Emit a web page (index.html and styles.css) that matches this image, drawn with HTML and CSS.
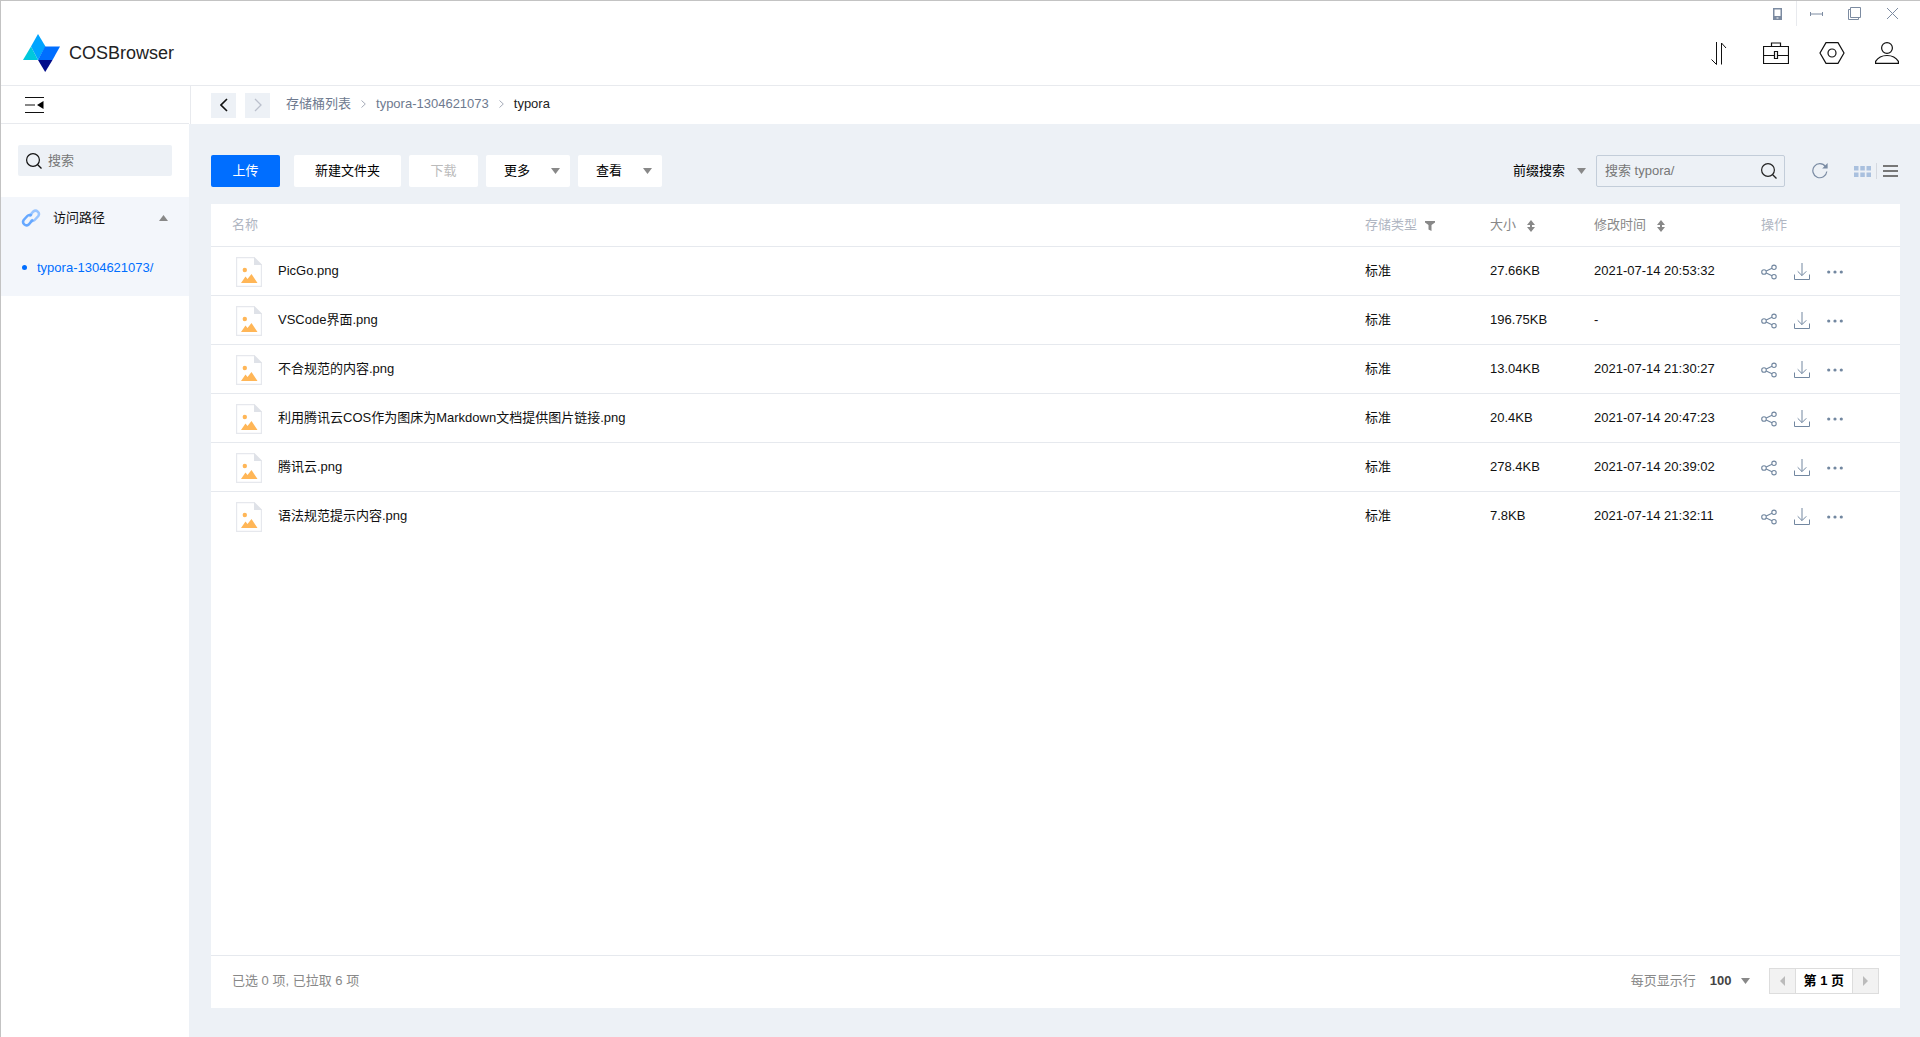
FILE: index.html
```html
<!DOCTYPE html>
<html lang="zh-CN">
<head>
<meta charset="utf-8">
<title>COSBrowser</title>
<link rel="stylesheet" href="styles.css">
</head>
<body>
<svg class="defs" aria-hidden="true">
  <symbol id="search" viewBox="0 0 16 16"><circle cx="7" cy="7" r="6.4" fill="none" stroke="currentColor" stroke-width="1.2"/><path d="M11.7 11.7l3.8 3.8" fill="none" stroke="currentColor" stroke-width="1.3"/></symbol>
  <symbol id="file" viewBox="0 0 26 30"><path d="M.5.5H18l7.500 7.500v21.500H.5z" fill="#fff" stroke="#e6e8ed" stroke-width="1.4"/><path d="M18 0v8h8z" fill="#dfe2e8"/><circle cx="8.800" cy="13" r="2.200" fill="#ffb657"/><path d="M5 26l4.500-6.500 2 2.500 4-5L21.500 26z" fill="#ffb657"/></symbol>
  <symbol id="share" viewBox="0 0 16 16"><g fill="none" stroke="currentColor" stroke-width="1.1"><circle cx="3" cy="8" r="2.300"/><circle cx="13" cy="3.300" r="2.200"/><circle cx="13" cy="12.700" r="2.200"/><path d="M5.200 7.100l5.800-2.800M5.200 8.900l5.800 2.900"/></g></symbol>
  <symbol id="download" viewBox="0 0 16 18"><path d="M.5 11.500v5h15v-5M8 0v12.500M3.700 8.300L8 12.600l4.300-4.300" fill="none" stroke="currentColor"/></symbol>
  <symbol id="more" viewBox="0 0 16 4"><g fill="currentColor"><circle cx="1.700" cy="2" r="1.600"/><circle cx="8" cy="2" r="1.600"/><circle cx="14.300" cy="2" r="1.600"/></g></symbol>
  <symbol id="sort" viewBox="0 0 8 12"><path d="M4 0l4 5H5v2h3l-4 5-4-5h3V5H0z" fill="#888"/></symbol>
  <symbol id="down" viewBox="0 0 10 6"><path d="M0 0h9L4.500 6z" fill="#888"/></symbol>
</svg>
<div class="app">
  <header class="header">
    <div class="window-bar">
      <button class="win phone" aria-label="手机"><svg width="9" height="12" viewBox="0 0 9 12"><path d="M0 0h9v12H0zM1.500 1.500v6.500h6V1.500zM3.500 9.500v1h2v-1z" fill="currentColor" fill-rule="evenodd"/></svg></button>
      <button class="win" aria-label="最小化"><svg width="13" height="4" viewBox="0 0 13 4"><path d="M.5 0v4M12.500 0v4M0 2h13" stroke="currentColor"/></svg></button>
      <button class="win" aria-label="最大化"><svg width="13" height="13" viewBox="0 0 13 13"><path d="M2.500.5h10v10h-10zM2.500 2.500h-2v10h10v-2" fill="none" stroke="currentColor"/></svg></button>
      <button class="win" aria-label="关闭"><svg width="11" height="11" viewBox="0 0 11 11"><path d="M0 0l11 11M11 0L0 11" stroke="currentColor"/></svg></button>
    </div>
    <div class="title-bar">
      <a class="brand" href="#">
        <svg width="38" height="38" viewBox="0 0 38 38"><path d="M15 0l7.500 12.500L15 26 8 12.500z" fill="#00a4ff"/><path d="M8 12.500L15 26H0z" fill="#00c8dc"/><path d="M22 12.500h15L29.500 26H15z" fill="#006eff"/><path d="M15 26h14.500l-7.300 12z" fill="#000c8b"/></svg>
        <span>COSBrowser</span>
      </a>
      <nav class="tools">
        <button aria-label="传输列表"><svg width="16" height="23" viewBox="0 0 16 23"><path d="M5.500 0v22.500L.5 17.500M10.500 22.500V1l4.500 5" fill="none" stroke="currentColor"/></svg></button>
        <button aria-label="工具箱"><svg width="26" height="22" viewBox="0 0 26 22"><path d="M.5 4.500h25v17H.5zM8.500 4.500v-3.500h9v3.500M.5 13.500h11M14.500 13.500h11M11.500 9.500h3v7h-3z" fill="none" stroke="currentColor" stroke-width="1.200"/></svg></button>
        <button aria-label="设置"><svg width="26" height="22" viewBox="0 0 26 22"><path d="M7 .6h12l6 10.400-6 10.400H7L1 11z" fill="none" stroke="currentColor" stroke-width="1.200"/><circle cx="13" cy="11" r="4" fill="none" stroke="currentColor" stroke-width="1.200"/></svg></button>
        <button aria-label="账号"><svg width="24" height="22" viewBox="0 0 24 22"><circle cx="12" cy="6" r="5.400" fill="none" stroke="currentColor" stroke-width="1.200"/><path d="M.6 21.400v-2C3 15.500 7 13.500 12 13.500s9 2 11.400 5.900v2z" fill="none" stroke="currentColor" stroke-width="1.200"/></svg></button>
      </nav>
    </div>
  </header>
  <div class="body">
    <aside class="sidebar">
      <div class="side-top"><button aria-label="收起菜单"><svg width="20" height="18" viewBox="0 0 20 18"><path d="M1 1.500h19M1 9h10M1 16.500h19" stroke="#111" stroke-width="1.200"/><path d="M13 9l6.500-4v8z" fill="#000"/></svg></button></div>
      <label class="side-search"><svg width="16" height="16"><use href="#search"/></svg><input type="text" placeholder="搜索" aria-label="搜索"></label>
      <section class="paths">
        <button class="paths-head">
          <svg width="20" height="20" viewBox="0 0 20 20"><g fill="none" stroke-width="2.500"><path d="M8 8.500l4.300-5a3.400 3.400 0 0 1 5 4.500l-3.600 4a3.200 3.200 0 0 1-4.500.2" stroke="#99c5ff"/><path d="M12 11.500l-4.300 5a3.400 3.400 0 0 1-5-4.500l3.600-4a3.200 3.200 0 0 1 4.500-.2" stroke="#66a8ff"/></g></svg>
          <span>访问路径</span>
          <svg class="up" width="9" height="6" viewBox="0 0 9 6"><path d="M0 6h9L4.500 0z" fill="#888"/></svg>
        </button>
        <a class="path" href="#">typora-1304621073/</a>
      </section>
    </aside>
    <main class="main">
      <div class="crumbs">
        <button class="nav-btn" aria-label="后退"><svg width="8" height="14" viewBox="0 0 8 14"><path d="M7 1L1 7l6 6" fill="none" stroke="#111" stroke-width="1.600"/></svg></button>
        <button class="nav-btn" aria-label="前进" disabled><svg width="8" height="14" viewBox="0 0 8 14"><path d="M1 1l6 6-6 6" fill="none" stroke="#bbc0cc" stroke-width="1.300"/></svg></button>
        <nav class="trail">
          <a href="#">存储桶列表</a>
          <svg width="5" height="8" viewBox="0 0 5 8"><path d="M.5.5L4.300 4 .5 7.500" fill="none" stroke="#a5abb8"/></svg>
          <a href="#">typora-1304621073</a>
          <svg width="5" height="8" viewBox="0 0 5 8"><path d="M.5.5L4.300 4 .5 7.500" fill="none" stroke="#a5abb8"/></svg>
          <span>typora</span>
        </nav>
      </div>
      <div class="content">
        <div class="toolbar">
          <button class="btn primary">上传</button>
          <button class="btn">新建文件夹</button>
          <button class="btn" disabled>下载</button>
          <button class="btn menu">更多<svg width="10" height="6"><use href="#down"/></svg></button>
          <button class="btn menu">查看<svg width="10" height="6"><use href="#down"/></svg></button>
          <div class="find">
            <button class="prefix">前缀搜索<svg width="10" height="6"><use href="#down"/></svg></button>
            <label class="find-box"><input type="text" placeholder="搜索 typora/" aria-label="搜索 typora/"><svg width="16" height="16"><use href="#search"/></svg></label>
            <button class="refresh" aria-label="刷新"><svg width="16" height="16" viewBox="0 0 16 16"><path d="M14.800 8.500A7 7 0 1 1 13.500 3.600" fill="none" stroke="#7a8ba3" stroke-width="1.200"/><path d="M15.600 0v5.400h-5.400z" fill="#7a8ba3"/></svg></button>
            <button class="grid-view" aria-label="网格视图"><svg width="17" height="11" viewBox="0 0 17 11"><path d="M0 0h4.500v4.500H0zM6.300 0h4.500v4.500H6.300zM12.500 0H17v4.500h-4.500zM0 6.500h4.500V11H0zM6.300 6.500h4.500V11H6.300zM12.500 6.500H17V11h-4.500z" fill="#a9c0de"/></svg></button>
            <button class="list-view" aria-label="列表视图"><svg width="15" height="12" viewBox="0 0 15 12"><path d="M0 1h15M0 6h15M0 11h15" stroke="#777" stroke-width="2"/></svg></button>
          </div>
        </div>
        <section class="card">
          <table>
            <colgroup><col><col class="c-type"><col class="c-size"><col class="c-time"><col class="c-ops"></colgroup>
            <thead><tr>
              <th>名称</th>
              <th>存储类型<svg class="filter" width="10" height="10" viewBox="0 0 10 10"><path d="M0 0h10v1.500L6.500 4v6L3.500 8.500V4L0 1.500z" fill="#888"/></svg></th>
              <th class="sortable">大小<svg width="8" height="12"><use href="#sort"/></svg></th>
              <th class="sortable">修改时间<svg width="8" height="12"><use href="#sort"/></svg></th>
              <th>操作</th>
            </tr></thead>
            <tbody>
              <tr><td><div class="name"><svg width="26" height="30"><use href="#file"/></svg>PicGo.png</div></td><td>标准</td><td>27.66KB</td><td>2021-07-14 20:53:32</td><td><div class="ops"><button aria-label="分享"><svg width="16" height="16"><use href="#share"/></svg></button><button aria-label="下载"><svg width="16" height="18"><use href="#download"/></svg></button><button aria-label="更多"><svg width="16" height="4"><use href="#more"/></svg></button></div></td></tr>
              <tr><td><div class="name"><svg width="26" height="30"><use href="#file"/></svg>VSCode界面.png</div></td><td>标准</td><td>196.75KB</td><td>-</td><td><div class="ops"><button aria-label="分享"><svg width="16" height="16"><use href="#share"/></svg></button><button aria-label="下载"><svg width="16" height="18"><use href="#download"/></svg></button><button aria-label="更多"><svg width="16" height="4"><use href="#more"/></svg></button></div></td></tr>
              <tr><td><div class="name"><svg width="26" height="30"><use href="#file"/></svg>不合规范的内容.png</div></td><td>标准</td><td>13.04KB</td><td>2021-07-14 21:30:27</td><td><div class="ops"><button aria-label="分享"><svg width="16" height="16"><use href="#share"/></svg></button><button aria-label="下载"><svg width="16" height="18"><use href="#download"/></svg></button><button aria-label="更多"><svg width="16" height="4"><use href="#more"/></svg></button></div></td></tr>
              <tr><td><div class="name"><svg width="26" height="30"><use href="#file"/></svg>利用腾讯云COS作为图床为Markdown文档提供图片链接.png</div></td><td>标准</td><td>20.4KB</td><td>2021-07-14 20:47:23</td><td><div class="ops"><button aria-label="分享"><svg width="16" height="16"><use href="#share"/></svg></button><button aria-label="下载"><svg width="16" height="18"><use href="#download"/></svg></button><button aria-label="更多"><svg width="16" height="4"><use href="#more"/></svg></button></div></td></tr>
              <tr><td><div class="name"><svg width="26" height="30"><use href="#file"/></svg>腾讯云.png</div></td><td>标准</td><td>278.4KB</td><td>2021-07-14 20:39:02</td><td><div class="ops"><button aria-label="分享"><svg width="16" height="16"><use href="#share"/></svg></button><button aria-label="下载"><svg width="16" height="18"><use href="#download"/></svg></button><button aria-label="更多"><svg width="16" height="4"><use href="#more"/></svg></button></div></td></tr>
              <tr><td><div class="name"><svg width="26" height="30"><use href="#file"/></svg>语法规范提示内容.png</div></td><td>标准</td><td>7.8KB</td><td>2021-07-14 21:32:11</td><td><div class="ops"><button aria-label="分享"><svg width="16" height="16"><use href="#share"/></svg></button><button aria-label="下载"><svg width="16" height="18"><use href="#download"/></svg></button><button aria-label="更多"><svg width="16" height="4"><use href="#more"/></svg></button></div></td></tr>
            </tbody>
          </table>
          <footer class="foot">
            <span class="count">已选 0 项, 已拉取 6 项</span>
            <span>每页显示行</span>
            <button class="per">100<svg width="10" height="6"><use href="#down"/></svg></button>
            <div class="pager">
              <button aria-label="上一页" disabled><svg width="5" height="10" viewBox="0 0 5 10"><path d="M5 0v10L0 5z" fill="#bbb"/></svg></button>
              <span>第 1 页</span>
              <button aria-label="下一页" disabled><svg width="5" height="10" viewBox="0 0 5 10"><path d="M0 0v10l5-5z" fill="#bbb"/></svg></button>
            </div>
          </footer>
        </section>
      </div>
    </main>
  </div>
</div>
</body>
</html>
```
FILE: styles.css
```css
* { box-sizing: border-box; }
body { margin: 0; font: 13px/20px "Liberation Sans", "Noto Sans CJK SC", sans-serif; color: #111; background: #fff; }
button { font: inherit; color: inherit; background: none; border: 0; padding: 0; display: flex; align-items: center; justify-content: center; cursor: pointer; }
input { font: inherit; color: #111; background: none; border: 0; outline: 0; padding: 0; flex: 1; min-width: 0; }
input::placeholder { color: #777; opacity: 1; }
a { color: inherit; text-decoration: none; }
svg { display: block; flex: none; }
.defs { position: absolute; width: 0; height: 0; }

.app { min-height: 100vh; display: flex; flex-direction: column; border-top: 1px solid #c3c3c3; border-left: 1px solid #c3c3c3; }

.header { border-bottom: 1px solid #e8eaee; }
.window-bar { display: flex; justify-content: flex-end; height: 25px; padding-right: 9px; color: #7c8ba1; }
.win { width: 38px; }
.win.phone { border-right: 1px solid #e8eaee; }
.title-bar { display: flex; align-items: center; justify-content: space-between; height: 59px; padding: 0 21px 5px 22px; }
.brand { display: flex; align-items: center; gap: 8px; font-size: 18px; color: #222; }
.tools { display: flex; gap: 30px; }
.tools button:first-child { margin-right: 6px; }

.body { flex: 1; display: flex; }
.sidebar { width: 188px; flex: none; }
.side-top { display: flex; height: 38px; padding-left: 23px; border-bottom: 1px solid #e8eaee; }
.side-search { display: flex; align-items: center; gap: 6px; height: 31px; margin: 21px 17px; padding: 0 8px; background: #edf1f6; border-radius: 2px; }
.paths { background: #f3f6fb; padding-bottom: 18px; }
.paths-head { width: 100%; height: 42px; padding: 0 21px 0 20px; gap: 12px; }
.paths-head .up { margin-left: auto; }
.path { display: flex; align-items: center; gap: 10px; height: 39px; padding: 18px 0 0 21px; color: #006eff; }
.path::before { content: ""; width: 5px; height: 5px; border-radius: 50%; background: #006eff; }

.main { flex: 1; min-width: 0; display: flex; flex-direction: column; }
.crumbs { display: flex; align-items: center; gap: 9px; height: 38px; padding: 0 20px; margin-left: 1px; border-left: 1px solid #e8eaee; }
.nav-btn { width: 25px; height: 25px; background: #edf1f6; }
.trail { display: flex; align-items: center; gap: 10px; margin-left: 7px; padding-bottom: 2px; color: #6e7a8f; }
.trail span { color: #222; }
.content { flex: 1; display: flex; flex-direction: column; padding: 31px 20px 29px 22px; background: #edf1f6; }

.toolbar { display: flex; gap: 8px; margin-bottom: 17px; }
.btn { min-width: 69px; height: 32px; padding: 0 21px; background: #fff; border-radius: 2px; color: #000; }
.btn:disabled { color: #bbb; }
.btn.primary { background: #006eff; color: #fff; margin-right: 6px; }
.btn.menu { width: 84px; padding: 0 9px 0 18px; justify-content: space-between; }
.find { display: flex; align-items: center; margin-left: auto; color: #000; }
.prefix { gap: 12px; margin-right: 9px; }
.find-box { display: flex; align-items: center; width: 189px; height: 32px; padding: 0 7px 0 8px; border: 1px solid #c3cdd9; border-radius: 2px; color: #222; }
.refresh { margin: 0 26px 0 27px; }
.grid-view { height: 16px; padding-right: 5px; border-right: 1px solid #d5d9e0; margin-right: 6px; }
.list-view { margin-right: 2px; }

.card { flex: 1; display: flex; flex-direction: column; background: #fff; }
table { width: 100%; table-layout: fixed; border-collapse: separate; border-spacing: 0; }
.c-type { width: 125px; }
.c-size { width: 104px; }
.c-time { width: 167px; }
.c-ops { width: 139px; }
th, td { padding: 0; text-align: left; font-weight: normal; border-bottom: 1px solid #e6e9ee; }
th { height: 43px; color: #b0b6c2; }
td { height: 49px; }
tr:last-child td { border-bottom-color: transparent; }
thead tr:last-child th { border-bottom-color: #e6e9ee; }
th:first-child { padding-left: 21px; }
th.sortable { color: #888; }
th svg { display: inline-block; vertical-align: middle; margin-left: 11px; }
th .filter { margin-left: 8px; }
.name { display: flex; align-items: center; gap: 16px; padding-left: 25px; }
.name svg, .ops svg { margin-top: 1px; }
.ops { display: flex; align-items: center; gap: 17px; color: #7287a0; }

.foot { display: flex; align-items: center; height: 53px; margin-top: auto; padding: 0 21px 2px; border-top: 1px solid #e6e9ee; color: #888; }
.count { margin-right: auto; }
.per { gap: 9px; margin: 0 18px 0 14px; color: #444; font-weight: bold; }
.pager { display: flex; height: 26px; border: 1px solid #ddd; color: #000; font-weight: bold; }
.pager button { width: 25px; background: #f2f2f2; }
.pager span { padding: 2px 8px; border: solid #ddd; border-width: 0 1px; }
```
